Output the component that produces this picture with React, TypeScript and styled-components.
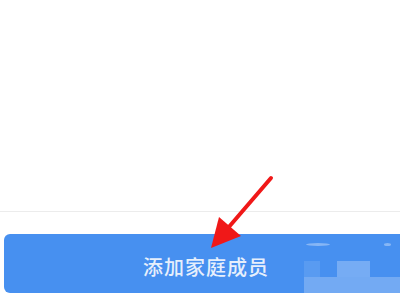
import React from 'react'
import styled, { createGlobalStyle } from 'styled-components'

const GlobalStyle = createGlobalStyle`
  html, body {
    margin: 0;
    padding: 0;
    background: #ffffff;
  }
  body {
    font-family: "Noto Sans CJK SC", "Noto Sans", sans-serif;
  }
`

const Page = styled.div`
  position: relative;
  width: 400px;
  height: 300px;
  overflow: hidden;
  display: flex;
  flex-direction: column;
  background: #ffffff;
`

const Content = styled.div`
  height: 211px;
  border-bottom: 1px solid #ececec;
`

const Footer = styled.div`
  padding: 22px 0 0 4px;
`

const AddButton = styled.div`
  position: relative;
  width: 410px;
  height: 59px;
  border-radius: 6px;
  background: #4790f0;
  display: flex;
  align-items: center;
  padding-left: 139px;
  box-sizing: border-box;
  overflow: hidden;
`

const Label = styled.span`
  color: #e6effc;
  font-size: 20px;
  font-weight: 500;
  letter-spacing: 1px;
  line-height: 1;
  margin-top: 6px;
`

// pixelated watermark patches over the button's right end
const Mosaic = styled.div<{ $x: number; $y: number; $w: number; $h: number; $a: number }>`
  position: absolute;
  left: ${(p) => p.$x}px;
  top: ${(p) => p.$y}px;
  width: ${(p) => p.$w}px;
  height: ${(p) => p.$h}px;
  background: rgba(255, 255, 255, ${(p) => p.$a});
`

const Glint = styled.div<{ $x: number; $w: number }>`
  position: absolute;
  left: ${(p) => p.$x}px;
  top: 9px;
  width: ${(p) => p.$w}px;
  height: 3px;
  border-radius: 50%;
  background: rgba(255, 255, 255, 0.35);
  filter: blur(0.6px);
`

const Arrow = styled.svg`
  position: absolute;
  left: 0;
  top: 0;
  pointer-events: none;
`

const App: React.FC = () => {
  return (
    <>
      <GlobalStyle />
      <Page>
        <Content />
        <Footer>
          <AddButton>
            <Label>添加家庭成员</Label>
            <Glint $x={302} $w={24} />
            <Glint $x={380} $w={7} />
            <Mosaic $x={300} $y={27} $w={16} $h={16} $a={0.1} />
            <Mosaic $x={333} $y={27} $w={33} $h={16} $a={0.26} />
            <Mosaic $x={300} $y={43} $w={110} $h={16} $a={0.24} />
          </AddButton>
        </Footer>
        <Arrow width="400" height="300" viewBox="0 0 400 300">
          <line x1="271" y1="178" x2="228" y2="228" stroke="#f01818" strokeWidth="4" strokeLinecap="round" />
          <polygon points="211,248 219,217 241,236" fill="#f01818" />
        </Arrow>
      </Page>
    </>
  )
}

export default App
